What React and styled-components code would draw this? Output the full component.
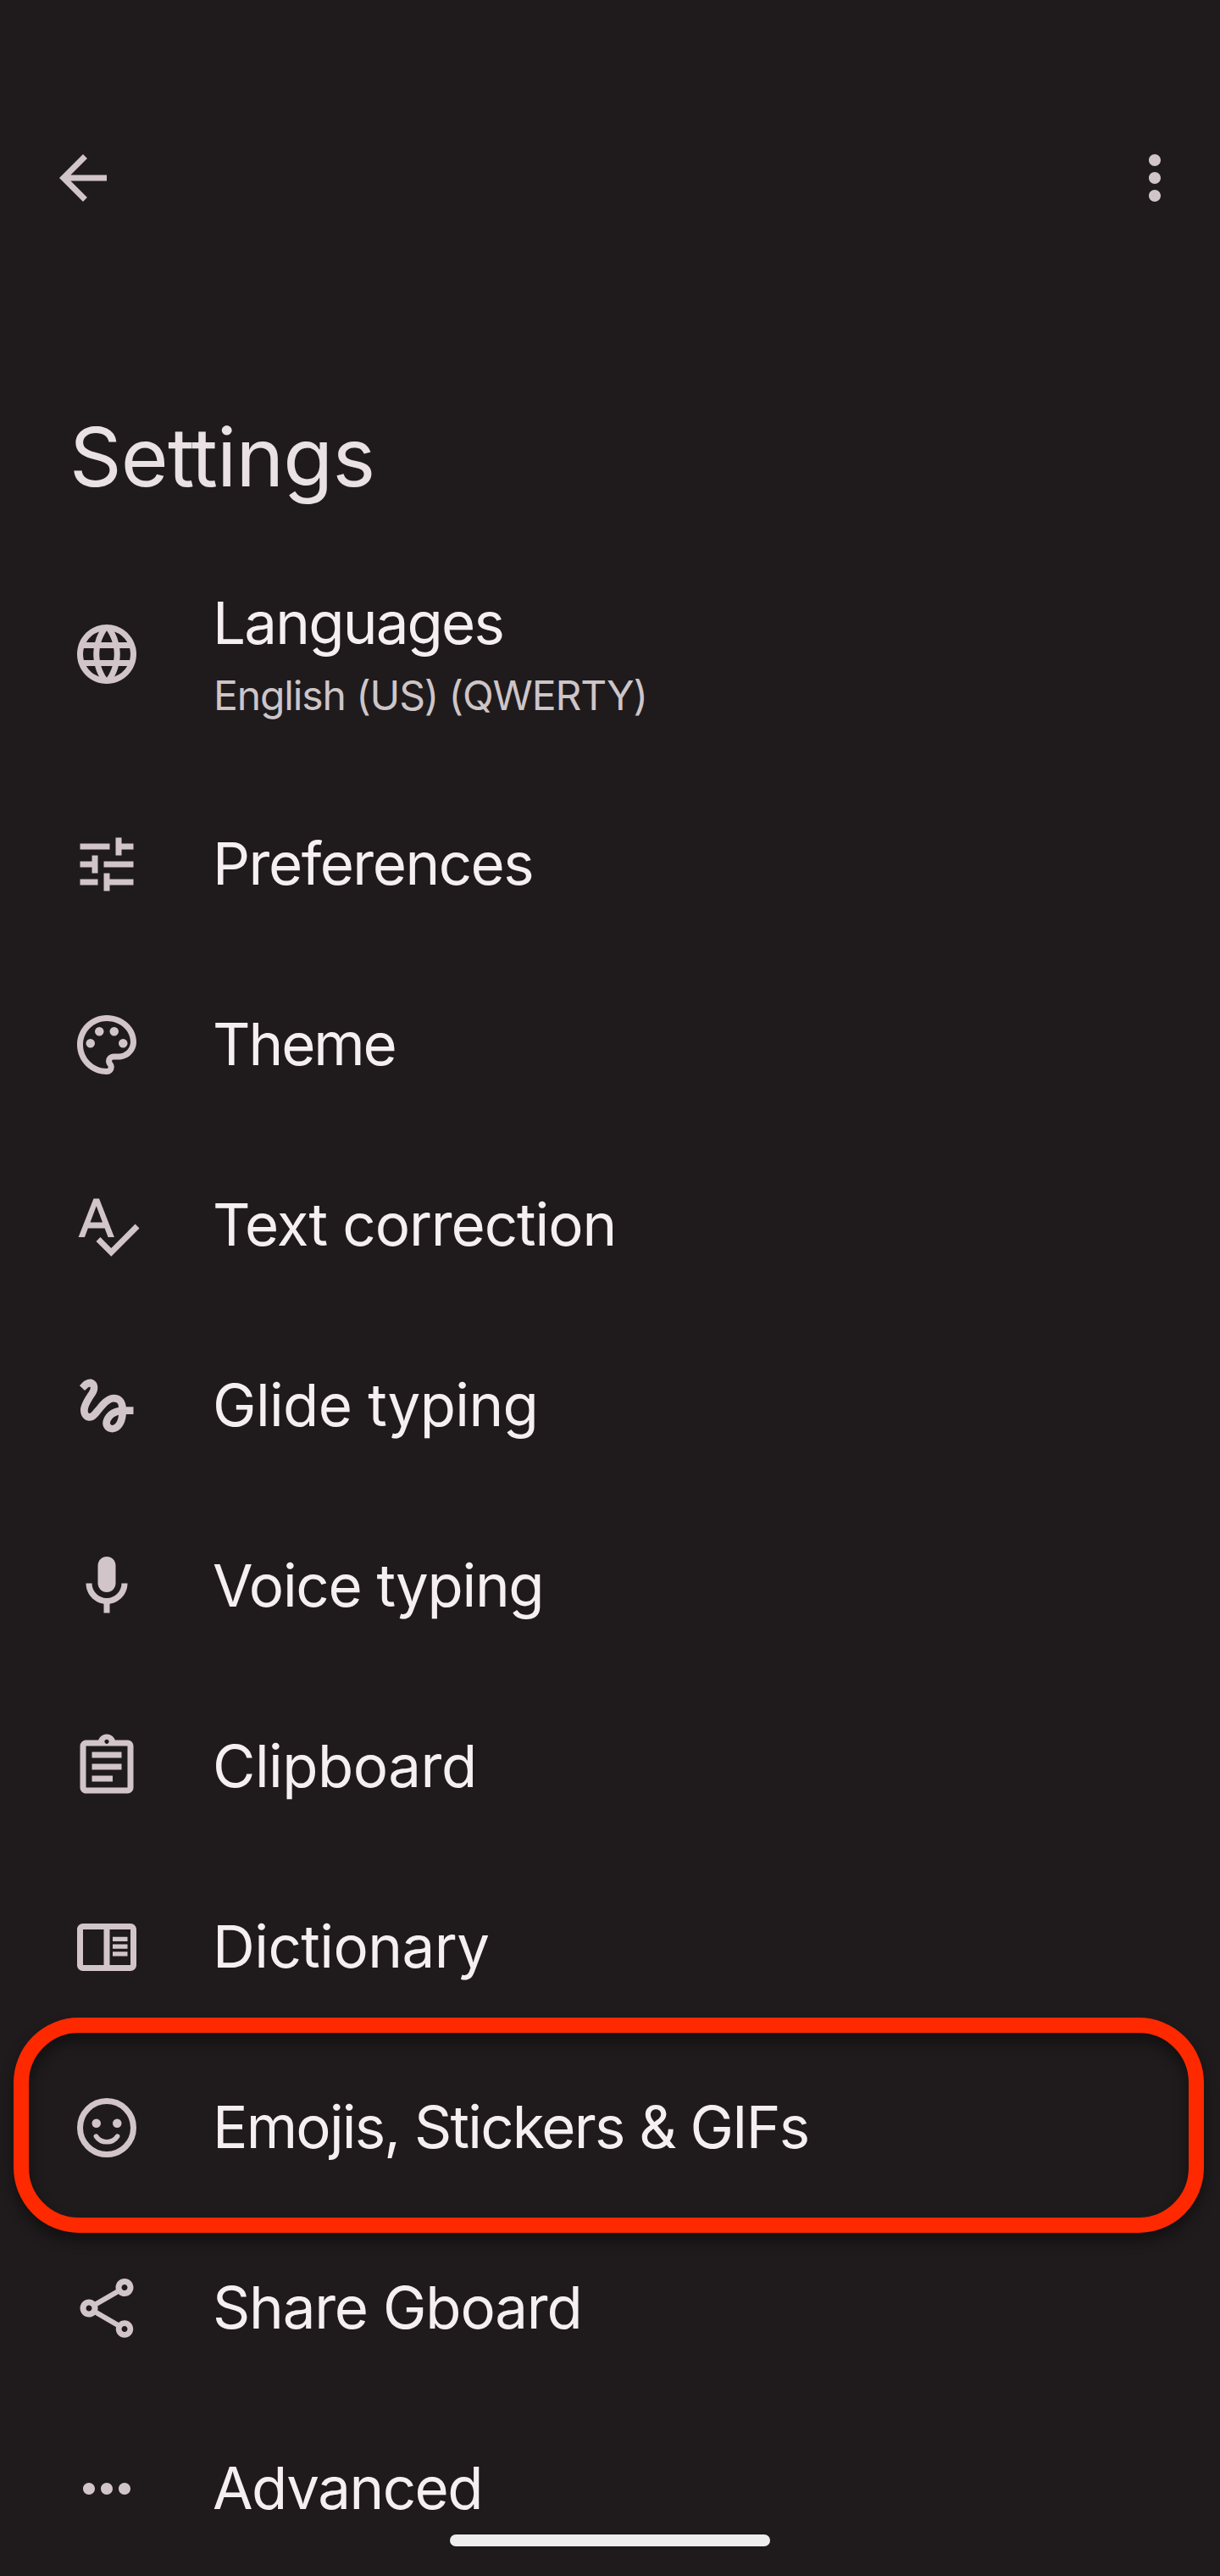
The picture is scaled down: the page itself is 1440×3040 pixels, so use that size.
import React from 'react'
import styled, { createGlobalStyle, css } from 'styled-components'
import {
    MdArrowBack,
    MdMoreVert,
    MdLanguage,
    MdTune,
    MdOutlinePalette,
    MdSpellcheck,
    MdGesture,
    MdOutlineAssignment,
    MdOutlineShare,
    MdMoreHoriz,
} from 'react-icons/md'

const MicIcon = () => (
    <svg viewBox="0 0 24 24" fill="currentColor">
        <path d="M12 14c1.66 0 3-1.34 3-3V5c0-1.66-1.34-3-3-3S9 3.34 9 5v6c0 1.66 1.34 3 3 3z" />
        <path d="M17 11c0 2.76-2.24 5-5 5s-5-2.24-5-5H5c0 3.53 2.61 6.43 6 6.92V21h2v-3.08c3.39-.49 6-3.39 6-6.92h-2z" />
    </svg>
)

const DictionaryIcon = () => (
    <svg viewBox="0 0 24 24" fill="currentColor">
        <path
            fillRule="evenodd"
            d="M4 4h16c1.1 0 2 .9 2 2v12c0 1.1-.9 2-2 2H4c-1.1 0-2-.9-2-2V6c0-1.1.9-2 2-2zM4 6v12h7V6H4zM13 6v12h7V6h-7z"
        />
        <path d="M14 8.5h5V10h-5zM14 11h5v1.5h-5zM14 13.5h5V15h-5z" />
    </svg>
)

const SmileIcon = () => (
    <svg viewBox="0 0 24 24" fill="none" stroke="currentColor">
        <circle cx="12" cy="12" r="9" strokeWidth="2" />
        <circle cx="8.5" cy="10.5" r="1.5" fill="currentColor" stroke="none" />
        <circle cx="15.5" cy="10.5" r="1.5" fill="currentColor" stroke="none" />
        <path d="M8.4 14.9C9.2 16.1 10.5 16.8 12 16.8s2.8-.7 3.6-1.9" strokeWidth="1.6" strokeLinecap="round" />
    </svg>
)

const items = [
    { label: 'Languages', sub: 'English (US) (QWERTY)', icon: <MdLanguage />, spacing: -1.8 },
    { label: 'Preferences', icon: <MdTune />, spacing: -1.5 },
    { label: 'Theme', icon: <MdOutlinePalette />, spacing: -2.1 },
    { label: 'Text correction', icon: <MdSpellcheck />, spacing: -1.1 },
    { label: 'Glide typing', icon: <MdGesture />, spacing: -0.6 },
    { label: 'Voice typing', icon: <MicIcon />, spacing: -1.3 },
    { label: 'Clipboard', icon: <MdOutlineAssignment />, spacing: -0.5 },
    { label: 'Dictionary', icon: <DictionaryIcon />, spacing: -0.55 },
    { label: 'Emojis, Stickers & GIFs', icon: <SmileIcon />, spacing: -1.8, marked: true },
    { label: 'Share Gboard', icon: <MdOutlineShare />, spacing: -1.2 },
    { label: 'Advanced', icon: <MdMoreHoriz />, spacing: -1.5 },
]

const App = () => {
    return (
        <>
            <GlobalStyle />
            <Screen>
                <TopBar>
                    <IconButton aria-label="Back"><MdArrowBack /></IconButton>
                    <IconButton aria-label="More options"><MdMoreVert /></IconButton>
                </TopBar>
                <Title>Se<TightT>t</TightT>tings</Title>
                <List>
                    {items.map((item) => (
                        <Row key={item.label} $tall={!!item.sub}>
                            <IconBox $tall={!!item.sub}>{item.icon}</IconBox>
                            <TextBox $tall={!!item.sub}>
                                <Label $spacing={item.spacing}>{item.label}</Label>
                                {item.sub && <Sub>{item.sub}</Sub>}
                            </TextBox>
                            {item.marked && <Marker />}
                        </Row>
                    ))}
                </List>
                <HomeBar />
            </Screen>
        </>
    )
}

export default App

const GlobalStyle = createGlobalStyle`
* {
    box-sizing: border-box;
}
body {
    margin: 0;
    background: #1f1b1c;
}
`

const Screen = styled.div`
position: relative;
display: flex;
flex-direction: column;
width: 1440px;
height: 3040px;
overflow: hidden;
background: #1f1b1c;
font-family: Inter, Roboto, sans-serif;
font-weight: 400;
`

const TopBar = styled.header`
display: flex;
justify-content: space-between;
flex-shrink: 0;
height: 252px;
padding: 168px 35px 0 56px;
`

const IconButton = styled.button`
width: 84px;
height: 84px;
padding: 0;
border: 0;
background: none;
color: #d1c5ca;

svg {
    display: block;
    width: 84px;
    height: 84px;
}
`

const Title = styled.h1`
flex-shrink: 0;
margin: 227px 0 67px;
padding-left: 82px;
font-size: 96px;
font-weight: 400;
line-height: 120px;
letter-spacing: -0.8px;
color: #e9e1e4;
`

/* pulls the two t crossbars together */
const TightT = styled.span`
letter-spacing: -4px;
`

const List = styled.main`
display: flex;
flex-direction: column;
flex-shrink: 0;
`

const Row = styled.div`
position: relative;
display: flex;
align-items: flex-start;
gap: 83px;
height: 213px;
padding: 64px 0 0 84px;
${({ $tall }) => $tall && css`
height: 248px;
padding-top: 27px;
`}
`

const IconBox = styled.div`
flex: none;
width: 84px;
height: 84px;
margin-top: ${({ $tall }) => ($tall ? '37px' : '0')};
color: #d1c5ca;

svg {
    display: block;
    width: 84px;
    height: 84px;
}
`

const TextBox = styled.div`
display: flex;
flex-direction: column;
gap: 14px;
margin-top: ${({ $tall }) => ($tall ? '0' : '-1px')};
white-space: nowrap;
`

const Label = styled.div`
font-size: 69px;
line-height: 84px;
letter-spacing: ${({ $spacing }) => $spacing}px;
color: #f5eff1;
`

const Sub = styled.div`
padding-left: 1px;
font-size: 48px;
line-height: 60px;
letter-spacing: -1.12px;
color: #cec5c8;
`

const Marker = styled.div`
position: absolute;
top: -24px;
left: 16px;
right: 19px;
height: 254px;
border: 18px solid #ff2900;
border-radius: 77px;
filter: drop-shadow(0 9px 8px rgba(0, 0, 0, 0.45));
pointer-events: none;
`

const HomeBar = styled.div`
position: absolute;
bottom: 35px;
left: 531px;
width: 378px;
height: 14px;
border-radius: 7px;
background: #eeeeee;
`
